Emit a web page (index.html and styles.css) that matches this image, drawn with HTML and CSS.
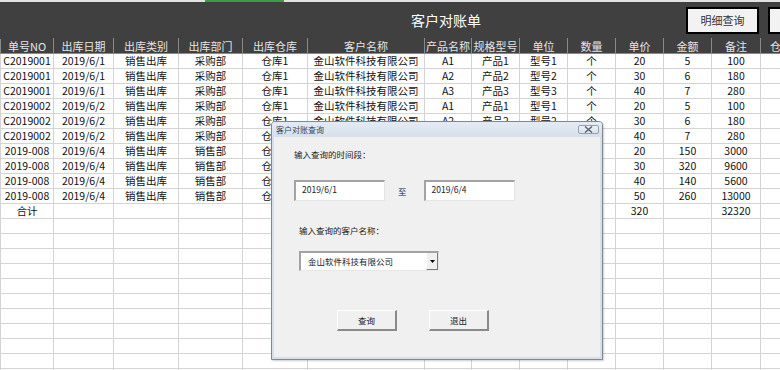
FILE: index.html
```html
<!DOCTYPE html>
<html lang="zh-CN">
<head>
    <meta charset="UTF-8">
    <title>客户对账单</title>
    <link rel="stylesheet" href="styles.css">
</head>
<body>
    <div class="topstrip"><div class="sel"></div></div>
    <div class="band">
        <h1>客户对账单</h1>
        <button class="toolbtn">明细查询</button>
        <button class="toolbtn btn2"></button>
    </div>

    <table class="sheet">
        <colgroup>
            <col style="width:53px"><col style="width:60px"><col style="width:65px"><col style="width:64px">
            <col style="width:65px"><col style="width:117px"><col style="width:47px"><col style="width:48px">
            <col style="width:48px"><col style="width:48px"><col style="width:48px"><col style="width:48px">
            <col style="width:49px"><col style="width:60px">
        </colgroup>
        <thead>
            <tr>
                <th>单号NO</th><th>出库日期</th><th>出库类别</th><th>出库部门</th><th>出库仓库</th>
                <th>客户名称</th><th>产品名称</th><th>规格型号</th><th>单位</th><th>数量</th>
                <th>单价</th><th>金额</th><th>备注</th><th class="cut">仓</th>
            </tr>
        </thead>
        <tbody>
            <tr><td>C2019001</td><td>2019/6/1</td><td>销售出库</td><td>采购部</td><td>仓库1</td><td>金山软件科技有限公司</td><td>A1</td><td>产品1</td><td>型号1</td><td>个</td><td>20</td><td>5</td><td>100</td><td></td></tr>
            <tr><td>C2019001</td><td>2019/6/1</td><td>销售出库</td><td>采购部</td><td>仓库1</td><td>金山软件科技有限公司</td><td>A2</td><td>产品2</td><td>型号2</td><td>个</td><td>30</td><td>6</td><td>180</td><td></td></tr>
            <tr><td>C2019001</td><td>2019/6/1</td><td>销售出库</td><td>采购部</td><td>仓库1</td><td>金山软件科技有限公司</td><td>A3</td><td>产品3</td><td>型号3</td><td>个</td><td>40</td><td>7</td><td>280</td><td></td></tr>
            <tr><td>C2019002</td><td>2019/6/2</td><td>销售出库</td><td>采购部</td><td>仓库1</td><td>金山软件科技有限公司</td><td>A1</td><td>产品1</td><td>型号1</td><td>个</td><td>20</td><td>5</td><td>100</td><td></td></tr>
            <tr><td>C2019002</td><td>2019/6/2</td><td>销售出库</td><td>采购部</td><td>仓库1</td><td>金山软件科技有限公司</td><td>A2</td><td>产品2</td><td>型号2</td><td>个</td><td>30</td><td>6</td><td>180</td><td></td></tr>
            <tr><td>C2019002</td><td>2019/6/2</td><td>销售出库</td><td>采购部</td><td>仓库1</td><td></td><td></td><td></td><td></td><td></td><td>40</td><td>7</td><td>280</td><td></td></tr>
            <tr><td>2019-008</td><td>2019/6/4</td><td>销售出库</td><td>销售部</td><td>仓库1</td><td></td><td></td><td></td><td></td><td></td><td>20</td><td>150</td><td>3000</td><td></td></tr>
            <tr><td>2019-008</td><td>2019/6/4</td><td>销售出库</td><td>销售部</td><td>仓库1</td><td></td><td></td><td></td><td></td><td></td><td>30</td><td>320</td><td>9600</td><td></td></tr>
            <tr><td>2019-008</td><td>2019/6/4</td><td>销售出库</td><td>销售部</td><td>仓库1</td><td></td><td></td><td></td><td></td><td></td><td>40</td><td>140</td><td>5600</td><td></td></tr>
            <tr><td>2019-008</td><td>2019/6/4</td><td>销售出库</td><td>销售部</td><td>仓库1</td><td></td><td></td><td></td><td></td><td></td><td>50</td><td>260</td><td>13000</td><td></td></tr>
            <tr><td>合计</td><td></td><td></td><td></td><td></td><td></td><td></td><td></td><td></td><td></td><td>320</td><td></td><td>32320</td><td></td></tr>
            <tr><td></td><td></td><td></td><td></td><td></td><td></td><td></td><td></td><td></td><td></td><td></td><td></td><td></td><td></td></tr>
            <tr><td></td><td></td><td></td><td></td><td></td><td></td><td></td><td></td><td></td><td></td><td></td><td></td><td></td><td></td></tr>
            <tr><td></td><td></td><td></td><td></td><td></td><td></td><td></td><td></td><td></td><td></td><td></td><td></td><td></td><td></td></tr>
            <tr><td></td><td></td><td></td><td></td><td></td><td></td><td></td><td></td><td></td><td></td><td></td><td></td><td></td><td></td></tr>
            <tr><td></td><td></td><td></td><td></td><td></td><td></td><td></td><td></td><td></td><td></td><td></td><td></td><td></td><td></td></tr>
            <tr><td></td><td></td><td></td><td></td><td></td><td></td><td></td><td></td><td></td><td></td><td></td><td></td><td></td><td></td></tr>
            <tr><td></td><td></td><td></td><td></td><td></td><td></td><td></td><td></td><td></td><td></td><td></td><td></td><td></td><td></td></tr>
            <tr><td></td><td></td><td></td><td></td><td></td><td></td><td></td><td></td><td></td><td></td><td></td><td></td><td></td><td></td></tr>
            <tr><td></td><td></td><td></td><td></td><td></td><td></td><td></td><td></td><td></td><td></td><td></td><td></td><td></td><td></td></tr>
            <tr><td></td><td></td><td></td><td></td><td></td><td></td><td></td><td></td><td></td><td></td><td></td><td></td><td></td><td></td></tr>
            <tr><td></td><td></td><td></td><td></td><td></td><td></td><td></td><td></td><td></td><td></td><td></td><td></td><td></td><td></td></tr>
        </tbody>
    </table>

    <div class="dialog">
        <div class="dlg-title">
            <span>客户对账查询</span>
            <span class="close">
                <svg width="9" height="7" viewBox="0 0 9 7"><path d="M1 0.5 L8 6.5 M8 0.5 L1 6.5" stroke="#5a6470" stroke-width="1.4" fill="none"/></svg>
            </span>
        </div>
        <div class="dlg-body">
            <p class="lbl">输入查询的时间段：</p>
            <div class="range">
                <div class="textbox">2019/6/1</div>
                <span class="to">至</span>
                <div class="textbox">2019/6/4</div>
            </div>
            <p class="lbl lbl2">输入查询的客户名称：</p>
            <div class="combo">
                <span class="combo-text">金山软件科技有限公司</span>
                <span class="drop">
                    <svg width="5" height="3" viewBox="0 0 5 3"><path d="M0 0 H5 L2.5 3 Z" fill="#000"/></svg>
                </span>
            </div>
            <div class="actions">
                <button class="dlgbtn">查询</button>
                <button class="dlgbtn">退出</button>
            </div>
        </div>
    </div>
</body>
</html>
```

FILE: styles.css
```css
body {
    margin: 0;
    width: 780px;
    height: 370px;
    overflow: hidden;
    position: relative;
    background: #fff;
    font-family: "Noto Sans CJK SC", "Liberation Sans", sans-serif;
}

.topstrip {
    height: 2px;
    background: #e2e2e2;
}

.topstrip .sel {
    margin-left: 205px;
    width: 79px;
    height: 2px;
    background: #3d9b48;
}

.band {
    height: 36px;
    background: #404040;
    display: flex;
    align-items: center;
}

.band h1 {
    margin: 0 0 0 411px;
    width: 72px;
    flex-shrink: 0;
    font-size: 14px;
    font-weight: normal;
    color: #fff;
    line-height: 20px;
    white-space: nowrap;
}

.toolbtn {
    flex-shrink: 0;
    width: 73px;
    height: 27px;
    margin-left: 203px;
    background: #f2f2f2;
    border: 2px solid #000;
    font-family: inherit;
    font-size: 11px;
    color: #333;
    padding: 0;
}

.toolbtn.btn2 {
    margin-left: 9px;
}

/* worksheet */
.sheet {
    border-collapse: collapse;
    table-layout: fixed;
    width: 820px;
}

.sheet th {
    background: #404040;
    color: #e4e4e4;
    font-weight: normal;
    font-size: 11px;
    height: 14px;
    line-height: 14px;
    padding: 0;
    border: 1px solid #8a8a8a;
    border-top-color: #404040;
    white-space: nowrap;
    overflow: hidden;
}

.sheet th.cut {
    text-align: left;
    padding-left: 9px;
}

.sheet td {
    height: 14px;
    line-height: 14px;
    padding: 0;
    border: 1px solid #d4d4d4;
    font-size: 10.5px;
    color: #111;
    text-align: center;
    white-space: nowrap;
    overflow: hidden;
}

/* dialog */
.dialog {
    position: absolute;
    left: 271px;
    top: 121px;
    width: 332px;
    height: 239px;
    box-sizing: border-box;
    border: 1px solid #7e8893;
    border-radius: 4px 4px 0 0;
    background: #f0f0f0;
    box-shadow: 1px 1px 2px rgba(0, 0, 0, 0.2);
    font-size: 8.5px;
    color: #222;
}

.dlg-title {
    height: 15px;
    display: flex;
    align-items: center;
    justify-content: space-between;
    padding: 0 3px 0 4px;
    background: linear-gradient(#e4ebf4, #d6dfea);
    color: #3c4450;
    font-size: 8px;
    border-radius: 3px 3px 0 0;
}

.close {
    width: 21px;
    height: 9px;
    box-sizing: border-box;
    border: 1px solid #94a1b1;
    border-radius: 2px;
    background: linear-gradient(#edf1f6, #d9e0e9);
    display: flex;
    align-items: center;
    justify-content: center;
}

.dlg-body {
    padding: 0 0 0 20px;
    border-left: 2px solid #d7dfe9;
    border-right: 2px solid #d7dfe9;
    border-bottom: 2px solid #d7dfe9;
    height: 220px;
}

.lbl {
    margin: 0;
    padding-top: 11px;
    line-height: 12px;
}

.range {
    display: flex;
    align-items: center;
    margin-top: 20px;
}

.textbox {
    width: 91px;
    height: 21px;
    box-sizing: border-box;
    background: #fff;
    border-top: 2px solid #a3a3a3;
    border-left: 2px solid #a3a3a3;
    border-right: 1px solid #e6e6e6;
    border-bottom: 1px solid #e6e6e6;
    padding: 1px 0 0 6px;
    line-height: 12px;
}

.to {
    margin: 0 17px 0 13px;
}

.lbl2 {
    padding-top: 23px;
    padding-left: 5px;
}

.combo {
    display: flex;
    width: 140px;
    height: 20px;
    box-sizing: border-box;
    margin: 15px 0 0 5px;
    background: #fff;
    border-top: 2px solid #a3a3a3;
    border-left: 2px solid #a3a3a3;
    border-right: 1px solid #e6e6e6;
    border-bottom: 1px solid #e6e6e6;
}

.combo-text {
    flex: 1;
    padding: 2px 0 0 7px;
    line-height: 12px;
}

.drop {
    width: 12px;
    box-sizing: border-box;
    background: #f0f0f0;
    border-left: 1px solid #fff;
    border-right: 1px solid #7a7a7a;
    border-bottom: 1px solid #7a7a7a;
    display: flex;
    align-items: center;
    justify-content: center;
}

.actions {
    display: flex;
    gap: 32px;
    margin: 39px 0 0 43px;
}

.dlgbtn {
    width: 60px;
    height: 21px;
    padding: 0;
    background: #f0f0f0;
    border-top: 1px solid #fff;
    border-left: 1px solid #fff;
    border-right: 2px solid #8a8a8a;
    border-bottom: 2px solid #8a8a8a;
    font-family: inherit;
    font-size: 8.5px;
    color: #222;
}
```
